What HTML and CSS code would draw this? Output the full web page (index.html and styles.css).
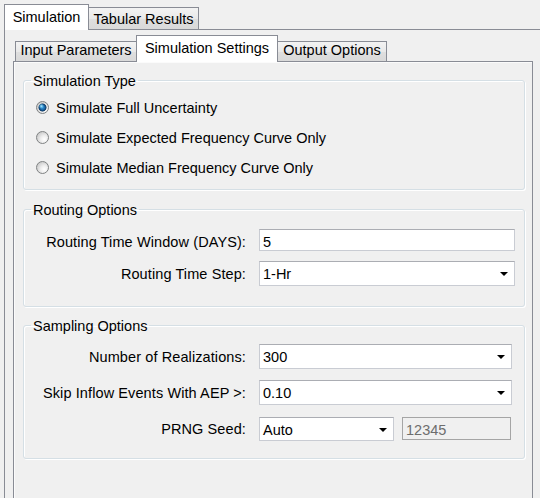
FILE: index.html
```html
<!DOCTYPE html>
<html>
<head>
<meta charset="utf-8">
<title>Simulation Settings</title>
<link rel="stylesheet" href="styles.css">
</head>
<body>
<div class="window">
  <div class="tabstrip outer-strip">
    <div class="tab sel w-simulation">Simulation</div>
    <div class="tab w-tabular">Tabular Results</div>
  </div>
  <div class="outer-panel">
    <div class="tabstrip inner-strip">
      <div class="tab w-input">Input Parameters</div>
      <div class="tab sel w-settings">Simulation Settings</div>
      <div class="tab w-output">Output Options</div>
    </div>
    <div class="inner-panel">
      <fieldset class="group group-type">
        <legend>Simulation Type</legend>
        <div class="radio-row"><span class="radio checked"></span><span>Simulate Full Uncertainty</span></div>
        <div class="radio-row"><span class="radio"></span><span>Simulate Expected Frequency Curve Only</span></div>
        <div class="radio-row"><span class="radio"></span><span>Simulate Median Frequency Curve Only</span></div>
      </fieldset>

      <fieldset class="group group-routing">
        <legend>Routing Options</legend>
        <div class="form-row row-gap-10">
          <div class="label">Routing Time Window (DAYS):</div>
          <div class="textbox w-route">5</div>
        </div>
        <div class="form-row">
          <div class="label">Routing Time Step:</div>
          <div class="combo w-route"><span class="combo-text">1-Hr</span><span class="arrow"></span></div>
        </div>
      </fieldset>

      <fieldset class="group group-sampling">
        <legend>Sampling Options</legend>
        <div class="form-row row-gap-11">
          <div class="label">Number of Realizations:</div>
          <div class="combo w-sample"><span class="combo-text">300</span><span class="arrow"></span></div>
        </div>
        <div class="form-row row-gap-12">
          <div class="label">Skip Inflow Events With AEP &gt;:</div>
          <div class="combo w-sample"><span class="combo-text">0.10</span><span class="arrow"></span></div>
        </div>
        <div class="form-row">
          <div class="label label-seed">PRNG Seed:</div>
          <div class="combo h-seed w-seed"><span class="combo-text">Auto</span><span class="arrow"></span></div>
          <div class="textbox disabled w-seedval">12345</div>
        </div>
      </fieldset>
    </div>
  </div>
</div>
</body>
</html>
```

FILE: styles.css
```css
html, body {
  margin: 0;
  padding: 0;
}

body {
  background: #f0f0f0;
  font-family: "Liberation Sans", Arial, sans-serif;
  font-size: 14.5px;
  line-height: 16px;
  color: #000;
}

.window {
  width: 540px;
  height: 498px;
  overflow: hidden;
  background: #f0f0f0;
}

/* ---------- tabs ---------- */
.tabstrip {
  display: flex;
  align-items: flex-end;
  position: relative;
  z-index: 1;
}

.tab {
  box-sizing: border-box;
  flex: none;
  border: 1px solid #898c95;
  border-bottom: none;
  background: linear-gradient(#f3f3f3, #e9e9e9 50%, #dfdfdf 51%, #d9d9d9);
  text-align: center;
  white-space: nowrap;
}

.tab + .tab {
  margin-left: -1px;
}

.tab.sel {
  background: #fff;
  margin-bottom: -1px;
  position: relative;
  z-index: 2;
}

.outer-strip {
  height: 29px;
  padding-left: 4px;
}

.outer-strip .tab {
  height: 22px;
  padding-top: 3px;
}

.outer-strip .tab.sel {
  height: 26px;
  padding-top: 4px;
}

.w-simulation { width: 85px; }
.w-tabular { width: 111px; }

.outer-panel {
  margin-left: 4px;
  height: 480px;
  border-top: 1px solid #898c95;
  border-left: 1px solid #898c95;
  background: #f0f0f0;
}

.inner-strip {
  height: 31px;
  margin-left: 8px;
  padding-left: 2px;
}

.inner-strip .tab {
  height: 20px;
  padding-top: 0;
}

.inner-strip .tab.sel {
  height: 27px;
  padding-top: 4px;
}

.w-input { width: 122px; }
.w-settings { width: 142px; }
.w-output { width: 110px; }

.inner-panel {
  box-sizing: border-box;
  margin-left: 8px;
  width: 520px;
  height: 450px;
  border: 1px solid #898c95;
  border-bottom: none;
  background: #f0f0f0;
  box-shadow: inset 1px 1px 0 #fbfbfb;
  padding-top: 9px;
}

/* ---------- group boxes ---------- */
.group {
  margin: 0 7px 0 9px;
  padding: 0;
  min-width: 0;
  border: 1px solid #d5dfe5;
  border-radius: 3px;
  box-shadow: 1px 1px 0 #fff, inset 1px 1px 0 #fff;
}

.group legend {
  padding: 2px 2px 0;
  margin-left: 7px;
  line-height: 16px;
}

.group-type {
  padding-top: 4px;
  padding-bottom: 6px;
}

.group-routing {
  margin-top: 10px;
  padding-top: 11px;
  padding-bottom: 20px;
}

.group-sampling {
  margin-top: 9px;
  padding-top: 10px;
  padding-bottom: 17px;
}

/* ---------- radios ---------- */
.radio-row {
  display: flex;
  align-items: center;
  height: 30px;
  padding-left: 12px;
  white-space: nowrap;
}

.radio {
  box-sizing: border-box;
  flex: none;
  width: 13px;
  height: 13px;
  margin-right: 7px;
  margin-top: -2px;
  border: 1px solid #7f8283;
  border-radius: 50%;
  background: radial-gradient(circle at 66% 66%, #ffffff 0, #eeeeee 35%, #cdcdcd 75%, #b9b9b9 100%);
}

.radio.checked {
  background:
    radial-gradient(circle at 40% 38%, rgba(190, 240, 255, 0.95) 0, rgba(120, 205, 245, 0.7) 1.2px, rgba(90, 180, 230, 0) 2.6px),
    radial-gradient(circle at 50% 50%, #2f98d8 0, #1f6fb0 2px, #0f4476 3.3px, #2d4f72 3.8px, rgba(180, 195, 210, 0) 4.3px),
    radial-gradient(circle at 66% 66%, #ffffff 0, #eeeeee 35%, #cdcdcd 75%, #b9b9b9 100%);
}

/* ---------- form rows ---------- */
.form-row {
  display: flex;
  align-items: flex-start;
  white-space: nowrap;
}

.row-gap-10 { margin-bottom: 10px; }
.row-gap-11 { margin-bottom: 11px; }
.row-gap-12 { margin-bottom: 12px; }

.label {
  flex: none;
  width: 222px;
  margin-top: 5px;
  margin-right: 13px;
  text-align: right;
  letter-spacing: 0.1px;
}

.label-seed {
  margin-top: 4px;
}

.textbox,
.combo {
  box-sizing: border-box;
  flex: none;
  background: #fff;
  border: 1px solid #c9ccd3;
  border-top-color: #abadb3;
  padding: 4px 3px 0;
}

.textbox {
  height: 22px;
}

.combo {
  height: 25px;
  display: flex;
}

.combo-text {
  flex: 1;
}

.arrow {
  flex: none;
  align-self: center;
  width: 0;
  height: 0;
  margin-top: -3px;
  margin-right: 3px;
  border-left: 4px solid transparent;
  border-right: 4px solid transparent;
  border-top: 4px solid #000;
}

.w-route { width: 256px; }
.w-sample { width: 253px; }

.h-seed { height: 24px; }
.w-seed { width: 135px; }

.textbox.disabled {
  height: 23px;
  margin-left: 8px;
  background: #f0f0f0;
  border-color: #a5a5a5;
  color: #6d6d6d;
}

.w-seedval { width: 109px; }
```
